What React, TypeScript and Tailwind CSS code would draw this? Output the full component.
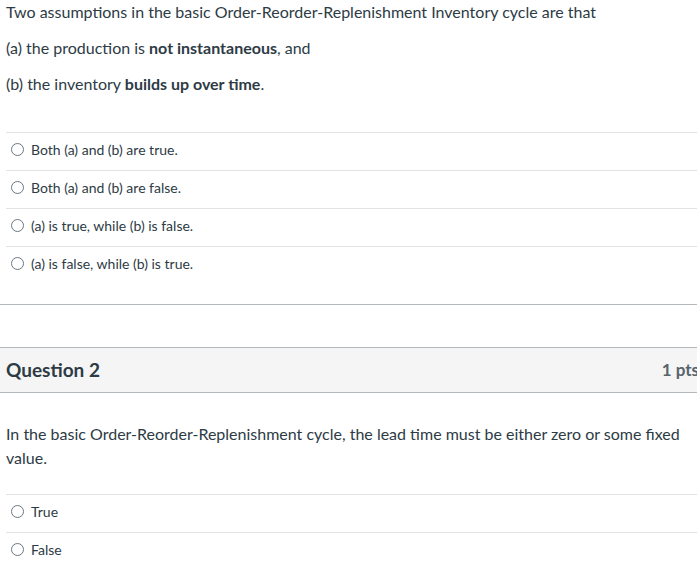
import React from "react";

const q1Answers = [
  "Both (a) and (b) are true.",
  "Both (a) and (b) are false.",
  "(a) is true, while (b) is false.",
  "(a) is false, while (b) is true.",
];

const q2Answers = ["True", "False"];

const Radio = () => (
  <span className="inline-block w-[13px] h-[13px] rounded-full border border-[#6b7780] bg-white shrink-0" />
);

const AnswerRow = ({ label }: { label: string }) => (
  <div className="flex items-center h-[38px] border-t border-[#e1e4e6] pl-[5px] pb-[4px] gap-[7px] text-[14px] text-[#2d3b45]">
    <Radio />
    <span>{label}</span>
  </div>
);

export default function App() {
  return (
    <div className="w-[697px] h-[564px] overflow-hidden bg-white font-['Lato','Liberation_Sans',sans-serif] text-[#2d3b45]">
      <div className="w-[720px]">
        {/* question 1 body */}
        <div className="px-[6px] text-[16px] leading-[24px]">
          <p className="mb-[12px]">
            Two assumptions in the basic Order-Reorder-Replenishment Inventory cycle are that
          </p>
          <p className="mb-[12px]">
            (a) the production is <strong className="font-bold">not instantaneous</strong>, and
          </p>
          <p>
            (b) the inventory <strong className="font-bold">builds up over time</strong>.
          </p>
        </div>
        <div className="mt-[36px] ml-[6px]">
          {q1Answers.map((a, i) => (
            <AnswerRow key={i} label={a} />
          ))}
        </div>
        <div className="mt-[20px] border-t border-[#b4b9bd]" />

        {/* question 2 */}
        <div className="mt-[42px] h-[46px] bg-[#f5f5f5] border-y border-[#b4b9bd] flex items-center justify-between pl-[6px] pr-[21px]">
          <span className="text-[19px] font-bold text-[#2d3b45]">Question 2</span>
          <span className="text-[17px] font-bold text-[#56636c]">1 pts</span>
        </div>
        <div className="w-[697px] px-[6px] pt-[29px] text-[16px] leading-[24px]">
          <p>
            In the basic Order-Reorder-Replenishment cycle, the lead time must be either zero or some fixed value.
          </p>
        </div>
        <div className="mt-[24px] ml-[6px]">
          {q2Answers.map((a, i) => (
            <AnswerRow key={i} label={a} />
          ))}
        </div>
      </div>
    </div>
  );
}
